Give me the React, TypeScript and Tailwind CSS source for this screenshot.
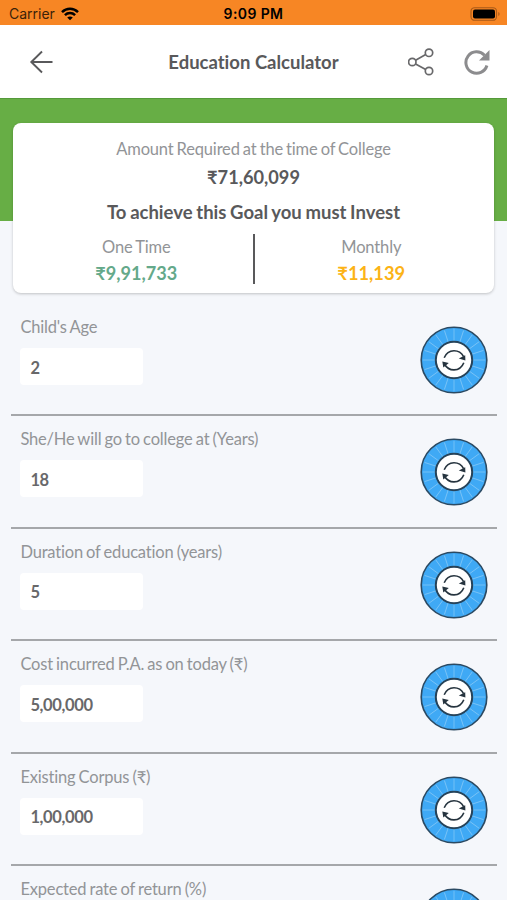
const fields = [
  { label: "Child's Age", value: '2' },
  { label: 'She/He will go to college at (Years)', value: '18' },
  { label: 'Duration of education (years)', value: '5' },
  { label: 'Cost incurred P.A. as on today (₹)', value: '5,00,000' },
  { label: 'Existing Corpus (₹)', value: '1,00,000' },
  { label: 'Expected rate of return (%)', value: '' },
];

const spokes = Array.from({ length: 20 }, (_, i) => i * 18);

function Dial() {
  return (
    <svg className="size-[68px] shrink-0" viewBox="0 0 68 68" fill="none">
      <circle cx="34" cy="34" r="32.8" fill="#3fa9f5" stroke="#2b4a63" strokeWidth="1.6" />
      {spokes.map((a) => (
        <path key={a} d="M34 3v13" stroke="#79c3f7" strokeWidth="0.9" transform={`rotate(${a} 34 34)`} />
      ))}
      <circle cx="34" cy="34" r="18.2" fill="#fff" stroke="#26435a" strokeWidth="2" />
      <path d="M24.2 31.800C26 27.200 29.600 24.700 34 24.700c4.200 0 7.600 2.200 9.600 5.900M43.800 36.800C42 41.400 38.400 43.900 34 43.900c-4.200 0-7.600-2.200-9.600-5.900" stroke="#26343f" strokeWidth="1.6" />
      <path d="M38.800 32.400l6.400-3.200.2 5.400zM28.800 37l-6.500-1.400 1 5.900z" fill="#26343f" />
    </svg>
  );
}

function StatusBar() {
  return (
    <div className="grid h-[25px] shrink-0 grid-cols-3 items-center bg-[#f78624] pt-[2px] font-['Inter','Liberation_Sans',sans-serif] text-[14px] text-black">
      <div className="flex items-center gap-[6px] pl-[9px]">
        <span className="text-[#3b2209]">Carrier</span>
        <svg className="h-[14px] w-[18px]" viewBox="0 0 18 14" fill="none" stroke="#000" strokeWidth="2.5">
          <path d="M1 5.200C5.600.700 12.400.700 17 5.200M3.900 8.200c2.900-2.800 7.300-2.800 10.200 0" />
          <path d="M6.200 10.500c1.700-1.500 3.900-1.500 5.600 0L9 13.300z" fill="#000" stroke="none" />
        </svg>
      </div>
      <span className="text-center text-[14px] font-semibold tracking-[0.400px]">9:09 PM</span>
      <svg className="mr-[6px] h-[14px] w-[31px] justify-self-end" viewBox="0 0 31 14" fill="none">
        <rect x="1" y=".7" width="25.500" height="12.600" rx="3.600" stroke="#a95a18" strokeWidth="1.100" />
        <rect x="3" y="2.600" width="22" height="8.800" rx="2" fill="#000" />
        <path d="M28.300 5v4c1.700-.6 1.700-3.400 0-4z" fill="#a95a18" />
      </svg>
    </div>
  );
}

function Header() {
  return (
    <header className="grid h-[73px] shrink-0 grid-cols-[1fr_auto_1fr] items-center bg-white">
      <svg className="ml-[29px] size-[25px]" viewBox="0 0 25 25" fill="none" stroke="#59595b" strokeWidth="1.900">
        <path d="M23.500 13H2M13 2.500L2.300 13 13 23.500" />
      </svg>
      <h1 className="text-[18.500px] leading-6 font-bold text-[#59595b]">Education Calculator</h1>
      <div className="flex items-center justify-end gap-[29px] pr-[17px]">
        <svg className="h-[28px] w-[27px]" viewBox="0 0 27 28" fill="none" stroke="#68686a" strokeWidth="1.700">
          <path d="M7.600 12.200l10.100-5.700M7.600 15.900l10.100 5.500" />
          <circle cx="4.300" cy="14" r="3.700" />
          <circle cx="21" cy="4.800" r="3.700" />
          <circle cx="21" cy="23" r="3.700" />
        </svg>
        <svg className="size-[26px]" viewBox="0 0 26 26" fill="none">
          <path d="M20.500 6.300A10.700 10.700 0 1 0 22.900 16.500" stroke="#8c8c8e" strokeWidth="3" />
          <path d="M25.500 1v10.500H15z" fill="#8c8c8e" />
        </svg>
      </div>
    </header>
  );
}

function Summary() {
  return (
    <section className="mx-[13px] -mt-[98px] flex h-[170px] shrink-0 flex-col items-center rounded-[8px] bg-white pt-[14px] text-center shadow-[0_1px_3px_rgba(0,0,0,0.22)]">
      <p className="text-[16.500px] leading-6 tracking-[-0.180px] text-[#929497] [word-spacing:-0.9px]">Amount Required at the time of College</p>
      <p className="mt-[4px] text-[18.200px] leading-6 font-bold text-[#59595b]">₹71,60,099</p>
      <p className="mt-[11px] text-[18.500px] leading-6 font-bold text-[#59595b] [word-spacing:-0.8px]">To achieve this Goal you must Invest</p>
      <div className="mt-[9px] grid w-full grid-cols-[1fr_2px_1fr]">
        <div className="pl-[7px]">
          <p className="pt-[2px] text-[16.500px] leading-6 tracking-[-0.150px] text-[#929497] [word-spacing:-0.9px]">One Time</p>
          <p className="pt-[2px] text-[18.100px] leading-6 font-bold text-[#64a98a]">₹9,91,733</p>
        </div>
        <div className="mt-px h-[50px] bg-[#59595b]" />
        <div>
          <p className="pr-[6px] pt-[2px] text-[16.500px] leading-6 tracking-[-0.150px] text-[#929497]">Monthly</p>
          <p className="pr-[6px] pt-[2px] text-[18.300px] leading-6 font-bold text-[#fcb316]">₹11,139</p>
        </div>
      </div>
    </section>
  );
}

export default function App() {
  return (
    <main className="flex h-[900px] w-[507px] flex-col overflow-hidden bg-[#f5f7fb] font-['Lato','Noto_Sans',sans-serif] [font-variant-ligatures:none]">
      <StatusBar />
      <Header />
      <div className="h-[123px] shrink-0 border-t border-[#549a3a] bg-[#67ae45]" />
      <Summary />
      <div className="mr-[10px] ml-[11px] mt-[11px] shrink-0">
        {fields.map((f) => (
          <div key={f.label} className="flex h-[112.400px] justify-between border-b-2 border-[#a5a7aa] pr-[9px] pl-[9.400px]">
            <div className="pt-[11px]">
              <label className="block text-[16.500px] leading-6 tracking-[-0.180px] whitespace-nowrap text-[#929497] [word-spacing:-0.9px]">{f.label}</label>
              <div className="mt-[9px] flex h-[37px] w-[123px] items-center rounded-[4px] bg-white pt-[3px] pl-[10px] text-[16.500px] font-bold tracking-[-0.350px] text-[#68686a]">
                {f.value}
              </div>
            </div>
            <div className="pt-[22px]">
              <Dial />
            </div>
          </div>
        ))}
      </div>
    </main>
  );
}
